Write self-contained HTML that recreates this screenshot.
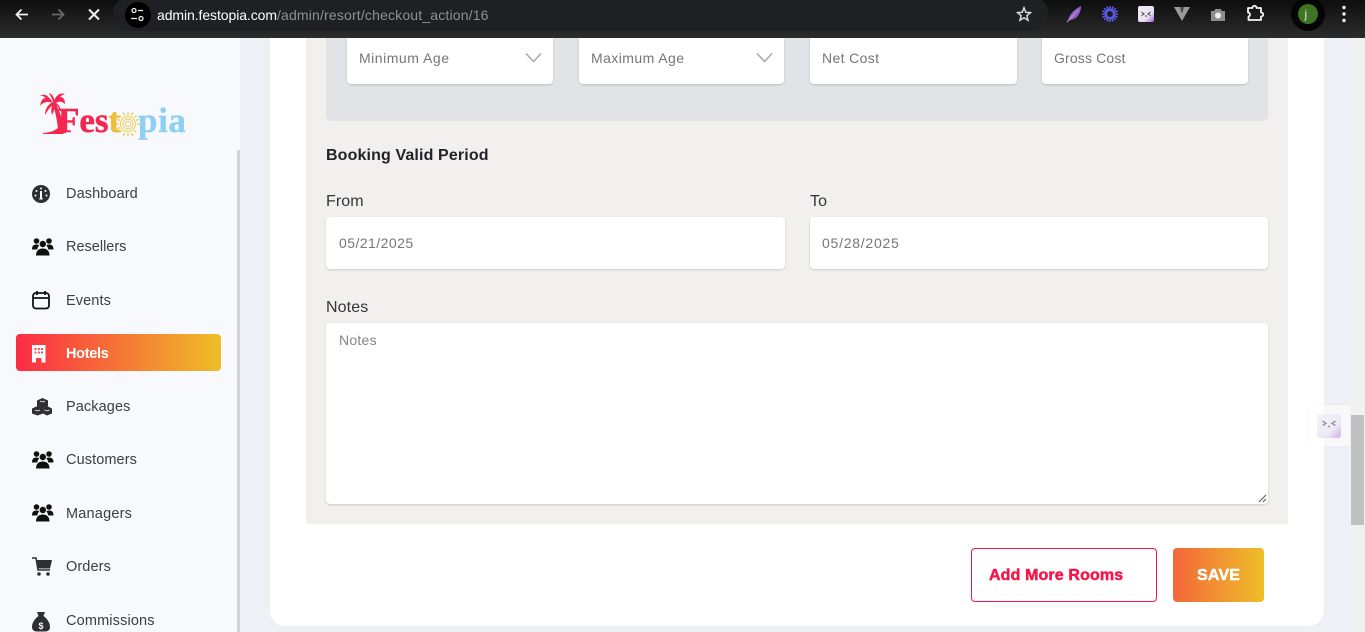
<!DOCTYPE html>
<html><head><meta charset="utf-8"><style>
*{box-sizing:border-box}
html,body{margin:0;padding:0}
body{width:1365px;height:632px;overflow:hidden;position:relative;background:#eff0f5;font-family:"Liberation Sans",sans-serif}
.a{position:absolute}
.t{position:absolute;white-space:nowrap;line-height:20px}
.nav{font-size:14.5px;color:#3d3d42;left:66px;letter-spacing:.1px}
.field{position:absolute;background:#fff;border-radius:4px;box-shadow:0 1px 2px rgba(0,0,0,.16)}
.ph{position:absolute;white-space:nowrap;font-size:14px;color:#75767a;line-height:20px;letter-spacing:.25px}
.lab{position:absolute;white-space:nowrap;font-size:16px;color:#34353a;line-height:20px;letter-spacing:.1px}
svg{position:absolute;overflow:visible}
</style></head><body>
<!-- browser bar -->
<div class="a" style="left:0;top:0;width:1365px;height:38px;background:linear-gradient(#0e0e0e,#2c2c2c)"></div>
<div class="a" style="left:113px;top:-4px;width:935px;height:35px;border-radius:18px;background:#1f2023"></div>
<div class="a" style="left:125px;top:2px;width:26px;height:26px;border-radius:13px;background:#000"></div>
<svg style="left:0;top:0" width="1365" height="38">
<path d="M28 14.5H17M21.5 9.5L16.500 14.500L21.500 19.500" fill="none" stroke="#f0f0f0" stroke-width="1.800"/>
<path d="M52 14.500H63M58.500 9.500L63.500 14.500L58.500 19.500" fill="none" stroke="#6a6a6a" stroke-width="1.800"/>
<path d="M89 9.500L99 19.500M99 9.500L89 19.500" fill="none" stroke="#f0f0f0" stroke-width="2"/>
<circle cx="134" cy="10.500" r="2" fill="none" stroke="#eee" stroke-width="1.300"/><path d="M138 10.500H143M131 18.500H137" stroke="#eee" stroke-width="1.300"/><circle cx="141" cy="18.500" r="2" fill="none" stroke="#eee" stroke-width="1.300"/>
<path d="M1024 7.800L1025.800 12.300L1030.500 12.600L1026.900 15.700L1028 20.300L1024 17.800L1020 20.300L1021.100 15.700L1017.500 12.600L1022.200 12.300Z" fill="none" stroke="#d8d8d8" stroke-width="1.500"/>
<path d="M1068 21C1069 14 1075 9 1081 6C1081 13 1077 19 1071 20Z" fill="#8c5fc0"/><path d="M1067 22L1078 10" stroke="#b892e0" stroke-width="1"/>
<g stroke="#5a5cf0" stroke-width="1.600"><path d="M1110 6V22M1102 14H1118M1104.300 8.300L1115.700 19.700M1115.700 8.300L1104.300 19.700M1106.900 6.600L1113.100 21.400M1113.100 6.600L1106.900 21.400M1102.600 10.900L1117.400 17.100M1117.400 10.900L1102.600 17.100"/></g><circle cx="1110" cy="14" r="3.600" fill="#1c1c1c" stroke="#5a5cf0" stroke-width="1.300"/>
<defs><linearGradient id="ex" x1="0" y1="0" x2="1" y2="1"><stop offset="0" stop-color="#f0eff5"/><stop offset=".65" stop-color="#e6e0f2"/><stop offset="1" stop-color="#9a5fd8"/></linearGradient>
<linearGradient id="ex2" x1="0" y1="0" x2="1" y2="1"><stop offset="0" stop-color="#f3f3f8"/><stop offset=".65" stop-color="#ece8f6"/><stop offset="1" stop-color="#cfaeea"/></linearGradient></defs>
<rect x="1138" y="6" width="16" height="16" rx="2" fill="url(#ex)"/><path d="M1141.500 12L1144 14L1141.500 15.500M1150.500 12L1148 14L1150.500 15.500M1145 16H1147" fill="none" stroke="#444" stroke-width="1"/>
<path d="M1174 7H1180L1182 13L1184 7H1190L1182 21Z" fill="#9a9a9a"/><path d="M1180 7H1184L1182 11Z" fill="#555"/>
<path d="M1211 11H1214L1215.500 9H1220.500L1222 11H1225V21H1211Z" fill="#8e8e8e"/><circle cx="1218" cy="15.500" r="3" fill="#eee"/>
<path d="M1248 8H1252.500C1252.500 5 1256.500 5 1256.500 8H1261V12.500C1264 12.500 1264 16.500 1261 16.500V20H1248.500V16.500C1250.500 16.500 1250.500 12.500 1248 12.500Z" fill="none" stroke="#f5f5f5" stroke-width="1.800" stroke-linejoin="round"/>
<circle cx="1308" cy="14" r="17" fill="#050505"/><circle cx="1308" cy="14" r="10" fill="#3e7323"/>
<circle cx="1344" cy="7.500" r="1.700" fill="#eee"/><circle cx="1344" cy="14" r="1.700" fill="#eee"/><circle cx="1344" cy="20.500" r="1.700" fill="#eee"/>
</svg>
<div class="t" style="left:1304.500px;top:4px;font-size:12px;color:#dfe8d8">j</div>
<div class="t" style="left:157px;top:5px;font-size:14px;color:#8f9094;letter-spacing:.17px"><span style="color:#fff;letter-spacing:-.08px">admin.festopia.com</span>/admin/resort/checkout_action/16</div>

<!-- sidebar -->
<div class="a" style="left:0;top:38px;width:240px;height:594px;background:#f8f9fc"></div>
<div class="a" style="left:237px;top:150px;width:3px;height:482px;background:#d4d4d6"></div>

<!-- logo -->
<svg style="left:0;top:0" width="240" height="160">
<g fill="#f5264f">
<path d="M58 133C58 125 56 112 52 103L55 102C60 112 64 124 66 133Z"/>
<path d="M53 103C48 95 44 93 40 96C43 95 44 97 46 98C43 98 41 100 40 106C43 102 48 101 53 103Z"/>
<path d="M54 102C49 103 45 108 45 115C48 110 50 107 52 106C51 109 51 112 52 115C54 111 55 107 56 103Z"/>
<path d="M54 102C55 96 60 92 65 94C62 95 61 96 60 97C63 97 65 99 65 104C62 101 59 101 56 103C59 105 61 108 61 112C59 108 57 105 54 103Z"/>
<path d="M53 102C52 97 49 94 49 93C52 94 54 97 55 102Z"/>
<path d="M43 133C50 132.500 55 131 59 127L64 134H43Z"/>
</g>
<g fill="none" stroke="#f0c945" stroke-width=".9"><circle cx="128" cy="124" r="7.500"/><circle cx="128" cy="124" r="5"/><circle cx="128" cy="124" r="2.500"/>
<path d="M128 112V115M128 133V137M116 124H119M137 124H140M119.500 115.500L121.500 117.500M134.500 130.500L136.500 132.500M136.500 115.500L134.500 117.500M121.500 130.500L119.500 132.500M123 112.500L124.500 115.500M133 112.500L131.500 115.500M117 119L120 120.500M139 119L136 120.500M117 129L120 127.500M123 136L124.500 133M133 136L131.500 133" stroke-width="1.200"/></g>
</svg>
<div class="t" style="left:58px;top:101px;font:700 35px/40px 'Liberation Serif',serif;color:#f5264f;-webkit-text-stroke:.5px #f5264f">Fes<span style="color:#eebf3a;-webkit-text-stroke:.5px #eebf3a">t</span></div>
<div class="t" style="left:138px;top:101px;font:700 35px/40px 'Liberation Serif',serif;color:#8ed0f4;letter-spacing:.6px;-webkit-text-stroke:.4px #8ed0f4">pia</div>

<!-- active -->
<div class="a" style="left:16px;top:334px;width:205px;height:37px;border-radius:4px;background:linear-gradient(90deg,#fd2b45,#eebe28)"></div>

<!-- nav icons -->
<svg style="left:0;top:0" width="240" height="632">
<g fill="#2f2f32">
<circle cx="41" cy="194" r="9"/></g>
<g fill="#f8f9fc"><circle cx="41" cy="188.500" r="1"/><circle cx="36.500" cy="191" r="1"/><circle cx="45.500" cy="191" r="1"/><circle cx="35.500" cy="195.500" r="1"/><circle cx="46.500" cy="195.500" r="1"/><path d="M40 191H42V197.500L43 199.500H39L40 197.500Z"/></g>

<g transform="translate(0,-1.500)"><g id="ppl" fill="#111">
<circle cx="36.500" cy="242.500" r="2.800"/><circle cx="49" cy="242.500" r="2.800"/><circle cx="42.800" cy="245.500" r="3.200"/>
<path d="M32 251C32 247 34 246 36.500 246C38 246 38.800 246.400 39.200 247C38 248 37.500 249.500 37.300 251ZM53.500 251C53.500 247 51.500 246 49 246C47.500 246 46.800 246.400 46.400 247C47.500 248 48 249.500 48.300 251Z"/>
<path d="M36 257C36 252.500 38.500 250 42.800 250C47 250 49.500 252.500 49.500 257Z"/></g></g>

<rect x="33" y="293" width="16" height="15.500" rx="3" fill="none" stroke="#111" stroke-width="1.800"/><path d="M33 298H49M37 291V295M45 291V295" stroke="#111" stroke-width="1.800"/>

<path d="M32 345H45.500V362.500H41.500V358H36V362.500H32Z" fill="#fff"/>
<g fill="#f55048"><rect x="34.500" y="348" width="2" height="2"/><rect x="37.800" y="348" width="2" height="2"/><rect x="41" y="348" width="2" height="2"/><rect x="34.500" y="351.500" width="2" height="2"/><rect x="37.800" y="351.500" width="2" height="2"/><rect x="41" y="351.500" width="2" height="2"/></g>

<g fill="#2f2f32"><path d="M42.500 398L48 400.500V406L42.500 408.500L37 406V400.500Z"/><path d="M37.500 406L43 408.500V413.500L37.500 415.500L32 413.500V408.500Z"/><path d="M47 406L52 408.500V413.500L47 415.500L43 413.500V408.500Z"/></g>
<g stroke="#f8f9fc" stroke-width=".8" fill="none"><path d="M40 401L42.500 402L45 401M35 410L37.500 411L40 410M44.500 410L47 411L49.500 410"/></g>

<use href="#ppl" y="211.500"/><use href="#ppl" y="264.500"/>

<path d="M32 558H36L38 570H50" fill="none" stroke="#2f2f32" stroke-width="1.500"/><path d="M36.500 560H52L50 568.500H38Z" fill="#2f2f32"/><circle cx="39" cy="574" r="1.800" fill="#2f2f32"/><circle cx="48" cy="574" r="1.800" fill="#2f2f32"/>

<path d="M37 612H45L43.500 616C47.500 619 50 623 50 627C50 630 48 631.500 45 631.500H37C34 631.500 32 630 32 627C32 623 34.500 619 38.500 616Z" fill="#2f2f32"/>
<text x="41" y="629" font-family="Liberation Sans, sans-serif" font-size="9" font-weight="700" fill="#f8f9fc" text-anchor="middle">$</text>
</svg>

<div class="t nav" style="top:184px">Dashboard</div>
<div class="t nav" style="top:237px;letter-spacing:0">Resellers</div>
<div class="t nav" style="top:291px">Events</div>
<div class="t nav" style="top:344px;color:#fff;font-weight:700;letter-spacing:-.3px">Hotels</div>
<div class="t nav" style="top:397px">Packages</div>
<div class="t nav" style="top:450px">Customers</div>
<div class="t nav" style="top:504px;letter-spacing:.2px">Managers</div>
<div class="t nav" style="top:557px">Orders</div>
<div class="t nav" style="top:611px;letter-spacing:.15px">Commissions</div>

<!-- main card -->
<div class="a" style="left:270px;top:38px;width:1054px;height:588px;background:#fff;border-radius:0 0 16px 16px"></div>
<div class="a" style="left:306px;top:38px;width:982px;height:486px;background:#f1f0ee"></div>
<div class="a" style="left:326px;top:38px;width:942px;height:83px;background:#e2e3e7;border-radius:0 0 5px 5px"></div>

<div class="field" style="left:347px;top:38px;width:206px;height:46px;border-radius:0 0 4px 4px"></div>
<div class="field" style="left:579px;top:38px;width:205px;height:46px;border-radius:0 0 4px 4px"></div>
<div class="field" style="left:810px;top:38px;width:207px;height:46px;border-radius:0 0 4px 4px"></div>
<div class="field" style="left:1042px;top:38px;width:206px;height:46px;border-radius:0 0 4px 4px"></div>
<div class="ph" style="left:359px;top:48px;letter-spacing:.52px">Minimum Age</div>
<div class="ph" style="left:591px;top:48px;letter-spacing:.43px">Maximum Age</div>
<div class="ph" style="left:822px;top:48px;letter-spacing:.37px">Net Cost</div>
<div class="ph" style="left:1054px;top:48px;letter-spacing:.15px">Gross Cost</div>
<svg style="left:0;top:0" width="1365" height="632">
<path d="M526 53.500L533.500 61.500L541 53.500M757 53.500L764.500 61.500L772 53.500" fill="none" stroke="#a9a9ac" stroke-width="1.500"/>
</svg>

<div class="t" style="left:326px;top:146px;font-size:16px;font-weight:700;color:#212329;letter-spacing:.13px">Booking Valid Period</div>
<div class="lab" style="left:326px;top:192px">From</div>
<div class="lab" style="left:810px;top:192px">To</div>
<div class="field" style="left:326px;top:217px;width:459px;height:52px"></div>
<div class="field" style="left:810px;top:217px;width:458px;height:52px"></div>
<div class="ph" style="left:339px;top:233px;letter-spacing:.45px">05/21/2025</div>
<div class="ph" style="left:822px;top:233px;letter-spacing:.75px">05/28/2025</div>
<div class="lab" style="left:326px;top:298px">Notes</div>
<div class="field" style="left:326px;top:323px;width:942px;height:181px"></div>
<div class="ph" style="left:339px;top:330px;color:#85868a">Notes</div>
<svg style="left:0;top:0" width="1365" height="632">
<path d="M1259 502L1266 495M1263 502L1266 499" stroke="#555" stroke-width="1"/>
</svg>

<!-- buttons -->
<div class="a" style="left:971px;top:548px;width:186px;height:54px;border:1px solid #f5164a;border-radius:4px;background:#fff"></div>
<div class="t" style="left:989px;top:566px;font-size:16px;font-weight:700;color:#f5164a;-webkit-text-stroke:.5px #f5164a;letter-spacing:.13px">Add More Rooms</div>
<div class="a" style="left:1173px;top:548px;width:91px;height:54px;border-radius:4px;background:linear-gradient(90deg,#f4663a,#eebf28)"></div>
<div class="t" style="left:1197px;top:566px;font-size:16px;font-weight:700;color:#fff;-webkit-text-stroke:.5px #fff;letter-spacing:.2px">SAVE</div>

<!-- floating ext + scrollbar -->
<div class="a" style="left:1309px;top:405px;width:41px;height:41px;background:rgba(255,255,255,.55);border-radius:8px 0 0 8px;box-shadow:0 0 4px rgba(0,0,0,.04)"></div>
<svg style="left:0;top:0" width="1365" height="632">
<rect x="1317" y="414" width="24" height="24" rx="3" fill="url(#ex2)"/>
<path d="M1322.500 421L1326 423.500L1322.500 425.500M1335.500 421L1332 423.500L1335.500 425.500M1328 426.500H1330" fill="none" stroke="#85858f" stroke-width="1.200"/>
</svg>
<div class="a" style="left:1350px;top:38px;width:15px;height:594px;background:#f1f1f1"></div>
<div class="a" style="left:1351px;top:415px;width:13px;height:110px;background:#c0c0c0"></div>
</body></html>
